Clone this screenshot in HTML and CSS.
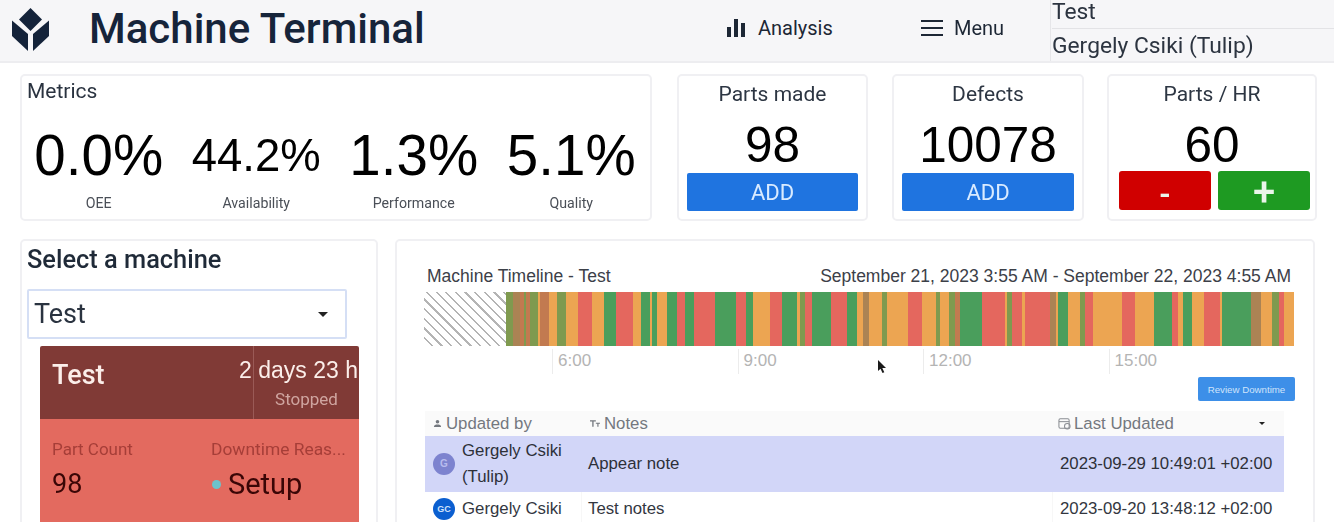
FILE: index.html
```html
<!DOCTYPE html>
<html lang="en">
<head>
<meta charset="utf-8">
<title>Machine Terminal</title>
<link rel="stylesheet" href="styles.css">
</head>
<body>
<div class="page">
  <header class="topbar">
    <svg class="logo" viewBox="0 0 60 60" width="60" height="60"><path d="M30.5 7 42 18.5 30.5 30 19 18.5Z"/><path d="M12 19.500 28 33V50L12 35Z"/><path d="M49 19.500 33 33V50L49 35Z"/></svg>
    <h1 class="title">Machine Terminal</h1>
    <a class="nav nav-analysis">
      <svg viewBox="0 0 20 20" width="20" height="20"><rect x="1" y="9" width="4" height="10"/><rect x="8" y="1" width="4" height="18"/><rect x="15" y="5" width="4" height="14"/></svg>
      <span>Analysis</span>
    </a>
    <a class="nav nav-menu">
      <svg viewBox="0 0 22 18" width="22" height="18"><rect y="1" width="22" height="2"/><rect y="8" width="22" height="2"/><rect y="15" width="22" height="2"/></svg>
      <span>Menu</span>
    </a>
    <div class="user">
      <div class="user-line">Test</div>
      <div class="user-line">Gergely Csiki (Tulip)</div>
    </div>
  </header>

  <section class="row-top">
    <div class="card metrics">
      <div class="metrics-title">Metrics</div>
      <div class="metric-grid">
        <div class="metric"><div class="metric-value">0.0%</div><div class="metric-label">OEE</div></div>
        <div class="metric"><div class="metric-value small">44.2%</div><div class="metric-label">Availability</div></div>
        <div class="metric"><div class="metric-value">1.3%</div><div class="metric-label">Performance</div></div>
        <div class="metric"><div class="metric-value">5.1%</div><div class="metric-label">Quality</div></div>
      </div>
    </div>
    <div class="card counter w190">
      <div class="counter-title">Parts made</div>
      <div class="counter-value">98</div>
      <button class="btn-add">ADD</button>
    </div>
    <div class="card counter w191">
      <div class="counter-title">Defects</div>
      <div class="counter-value">10078</div>
      <button class="btn-add">ADD</button>
    </div>
    <div class="card counter w210">
      <div class="counter-title">Parts / HR</div>
      <div class="counter-value">60</div>
      <div class="btn-pair">
        <button class="btn-step minus">-</button>
        <button class="btn-step plus">+</button>
      </div>
    </div>
  </section>

  <section class="row-bottom">
    <div class="card select-card">
      <h2 class="select-title">Select a machine</h2>
      <div class="dropdown"><span>Test</span><i class="caret"></i></div>
      <div class="machine">
        <div class="machine-head">
          <div class="machine-name">Test</div>
          <div class="machine-time">
            <div class="duration">2 days 23 hr</div>
            <div class="status">Stopped</div>
          </div>
        </div>
        <div class="machine-body">
          <div class="field f-count">
            <div class="field-label">Part Count</div>
            <div class="field-value">98</div>
          </div>
          <div class="field f-reason">
            <div class="field-label">Downtime Reas...</div>
            <div class="field-value reason"><i class="dot"></i>Setup</div>
          </div>
        </div>
      </div>
    </div>

    <div class="card timeline-card">
      <div class="tl-head"><span>Machine Timeline - Test</span><span>September 21, 2023 3:55 AM - September 22, 2023 4:55 AM</span></div>
      <div class="tl-chart">
        <div class="hatch"></div>
        <div class="bar">
          <i class="ol" style="flex:22"></i><i class="br" style="flex:20"></i><i class="rb" style="flex:12"></i><i class="ol" style="flex:6"></i><i class="rb" style="flex:12"></i><i class="ol" style="flex:25"></i><i class="or" style="flex:5"></i><i class="rb" style="flex:27"></i><i class="or" style="flex:23"></i><i class="ol" style="flex:27"></i><i class="or" style="flex:38"></i><i class="re" style="flex:42"></i><i class="or" style="flex:35"></i><i class="gr" style="flex:36"></i><i class="re" style="flex:50"></i><i class="or" style="flex:24"></i><i class="gr" style="flex:28"></i><i class="or" style="flex:5"></i><i class="gr" style="flex:15"></i><i class="or" style="flex:32"></i><i class="gr" style="flex:28"></i><i class="re" style="flex:25"></i><i class="gr" style="flex:27"></i><i class="re" style="flex:63"></i><i class="gr" style="flex:63"></i><i class="re" style="flex:29"></i><i class="gr" style="flex:23"></i><i class="or" style="flex:50"></i><i class="re" style="flex:37"></i><i class="gr" style="flex:45"></i><i class="or" style="flex:8"></i><i class="ol" style="flex:15"></i><i class="re" style="flex:22"></i><i class="gr" style="flex:55"></i><i class="re" style="flex:50"></i><i class="gr" style="flex:28"></i><i class="or" style="flex:18"></i><i class="br" style="flex:20"></i>
          <i class="or" style="flex:39"></i><i class="ol" style="flex:15"></i><i class="or" style="flex:63"></i><i class="re" style="flex:43"></i><i class="or" style="flex:40"></i><i class="ol" style="flex:12"></i><i class="or" style="flex:28"></i><i class="ol" style="flex:19"></i><i class="rb" style="flex:13"></i><i class="gr" style="flex:67"></i><i class="re" style="flex:68"></i><i class="or" style="flex:8"></i><i class="ol" style="flex:15"></i><i class="re" style="flex:29"></i><i class="or" style="flex:10"></i><i class="re" style="flex:75"></i><i class="br" style="flex:16"></i><i class="or" style="flex:8"></i><i class="gr" style="flex:29"></i><i class="or" style="flex:35"></i><i class="ol" style="flex:17"></i><i class="re" style="flex:23"></i><i class="or" style="flex:88"></i><i class="re" style="flex:38"></i><i class="or" style="flex:56"></i><i class="gr" style="flex:56"></i><i class="re" style="flex:17"></i><i class="or" style="flex:15"></i><i class="gr" style="flex:27"></i><i class="or" style="flex:36"></i><i class="re" style="flex:47"></i><i class="or" style="flex:8"></i><i class="gr" style="flex:87"></i><i class="br" style="flex:30"></i><i class="or" style="flex:33"></i><i class="ol" style="flex:19"></i><i class="re" style="flex:15"></i><i class="or" style="flex:31"></i>
        </div>
      </div>
      <div class="axis">
        <div class="tick">6:00</div>
        <div class="tick">9:00</div>
        <div class="tick">12:00</div>
        <div class="tick">15:00</div>
      </div>
      <div class="review-row"><button class="btn-review">Review Downtime</button></div>
      <div class="table">
        <div class="cell th">
          <svg viewBox="0 0 10 10" width="9" height="9"><circle cx="5" cy="3" r="2"/><path d="M1 9c0-2.500 2-3 4-3s4 .5 4 3Z"/></svg>
          <span>Updated by</span>
        </div>
        <div class="cell th">
          <svg viewBox="0 0 12 10" width="10" height="9"><path d="M0 1h7v1.500H4.300V9H2.700V2.500H0ZM7 4h5v1.200h-1.800V9H8.800V5.200H7Z"/></svg>
          <span>Notes</span>
        </div>
        <div class="cell th th-last">
          <svg viewBox="0 0 14 14" width="13" height="13" class="cal"><rect x="1" y="2" width="11" height="10" rx="1.500"/><path d="M1 5h11"/><circle cx="10" cy="10" r="3"/></svg>
          <span>Last Updated</span><i class="caret tiny"></i>
        </div>

        <div class="cell hl person"><span class="avatar av-g">G</span><span>Gergely Csiki (Tulip)</span></div>
        <div class="cell hl">Appear note</div>
        <div class="cell hl">2023-09-29 10:49:01 +02:00</div>

        <div class="cell person ruled"><span class="avatar av-gc">GC</span><span>Gergely Csiki</span></div>
        <div class="cell ruled">Test notes</div>
        <div class="cell">2023-09-20 13:48:12 +02:00</div>
      </div>
      <svg class="pointer" viewBox="0 0 10 14" width="10" height="14"><path d="M1 0v11l2.500-2.300L5.500 13l1.800-.8-2-4.300H9Z"/></svg>
    </div>
  </section>
</div>
</body>
</html>
```
FILE: styles.css
```css
* { box-sizing: border-box; }
html, body { margin: 0; padding: 0; background: #fff; }
.page {
  width: 1334px;
  height: 522px;
  overflow: hidden;
  font-family: Roboto, "Liberation Sans", sans-serif;
  color: #1a2433;
  filter: blur(0.45px);
}

/* top bar */
.topbar {
  display: flex;
  align-items: center;
  height: 63px;
  padding-bottom: 5px;
  background: #f6f6f8;
  border-bottom: 2px solid #ededf0;
}
.logo { flex: none; fill: #14233a; margin: 5px 29px 0 0; }
.title {
  margin: 0;
  width: 347px;
  flex: none;
  font-size: 42px;
  font-weight: 500;
  color: #16243a;
  white-space: nowrap;
}
.nav {
  display: flex;
  align-items: center;
  flex: none;
  font-size: 20px;
  color: #1d2735;
}
.nav svg { fill: #1d2735; flex: none; }
.nav-analysis { gap: 12px; margin-left: 290px; width: 195px; }
.nav-menu { gap: 11px; width: 129px; }
.user {
  flex: none;
  align-self: flex-start;
  width: 284px;
  height: 61px;
  border-left: 1px solid #e6e6e9;
  font-size: 22.800px;
  color: #2c3440;
  padding-left: 1px;
}
.user-line { height: 29px; line-height: 23px; border-bottom: 1px solid #e3e3e6; white-space: nowrap; }
.user-line + .user-line { height: 32px; line-height: 34px; border-bottom: 0; }

/* cards */
.card {
  background: #fff;
  border: 2px solid #f0f0f3;
  border-radius: 5px;
}
.row-top {
  display: flex;
  height: 147px;
  margin: 11px 0 0 20px;
}
.metrics { width: 632px; margin-right: 25px; }
.metrics-title { font-size: 21px; line-height: 22px; padding: 4px 0 0 5px; color: #2a3340; }
.metric-grid { display: grid; grid-template-columns: repeat(4, 1fr); margin: 22px 0 0 -2px; }
.metric { text-align: center; font-family: "Liberation Sans", sans-serif; color: #000; }
.metric-value { font-size: 56.500px; line-height: 64px; white-space: nowrap; }
.metric-value.small { font-size: 45.500px; }
.metric-label {
  font-family: Roboto, sans-serif;
  font-size: 14.200px;
  line-height: 16px;
  margin-top: 7px;
  color: #4a4f57;
}

.counter { display: flex; flex-direction: column; align-items: center; padding: 0 8px; }
.w190 { width: 191px; margin-right: 24px; }
.w191 { width: 192px; margin-right: 23px; }
.w210 { width: 210px; }
.counter-title { font-size: 21px; line-height: 24px; margin-top: 6px; color: #2d3643; white-space: nowrap; }
.counter-value {
  font-family: "Liberation Sans", sans-serif;
  font-size: 49.500px;
  line-height: 56px;
  margin-top: 11px;
  color: #000;
}
.btn-add {
  width: 100%;
  height: 38px;
  border: 0;
  border-radius: 2px;
  background: #1f74e0;
  color: #d9ebff;
  font: 22px Roboto, sans-serif;
  padding: 0;
}
.btn-pair { display: flex; gap: 7px; flex: none; width: 191px; margin: -2px 0 0 5px; }
.btn-step {
  flex: 1;
  height: 39px;
  border: 0;
  border-radius: 3px;
  color: #eaf5ea;
  padding: 0;
}
.minus { background: #d00000; font: 700 30px/46px Roboto, sans-serif; }
.plus { background: #1e9a22; font: 500 40px/44px Roboto, sans-serif; }

/* bottom row */
.row-bottom {
  display: flex;
  align-items: flex-start;
  margin: 18px 0 0 20px;
}
.select-card { width: 358px; height: 340px; margin-right: 17px; padding: 0 0 0 5px; }
.select-title { margin: 0; font-size: 25.400px; font-weight: 500; line-height: 30px; padding-top: 3px; color: #1f2a38; white-space: nowrap; }
.dropdown {
  display: flex;
  align-items: center;
  justify-content: space-between;
  width: 320px;
  height: 50px;
  margin-top: 15px;
  padding: 0 17px 0 5px;
  border: 2px solid #d5dff5;
  border-radius: 2px;
  font-size: 27px;
  color: #2a3340;
}
.caret {
  display: block;
  width: 0;
  height: 0;
  border: 5px solid transparent;
  border-top-color: #222;
  border-bottom: 0;
}
.machine { width: 319px; margin: 7px 0 0 13px; }
.machine-head {
  display: flex;
  height: 73px;
  background: #803a36;
  border-radius: 2px 2px 0 0;
  overflow: hidden;
  color: #fbeeea;
}
.machine-name { width: 213px; flex: none; font-size: 27px; font-weight: 500; line-height: 32px; padding: 13px 0 0 12px; }
.machine-time {
  width: 106px;
  flex: none;
  border-left: 1px solid #9a5a56;
  text-align: center;
}
.duration {
  font-family: "Liberation Sans", sans-serif;
  font-size: 23px;
  line-height: 26px;
  padding-top: 11px;
  margin-left: -15px;
  white-space: nowrap;
  text-align: left;
}
.status { font-size: 17px; line-height: 20px; margin-top: 6px; color: #cfa5a0; }
.machine-body {
  display: flex;
  height: 120px;
  padding: 20px 0 0 12px;
  background: #e36a5f;
}
.f-count { width: 159px; }
.field-label { font-size: 17px; line-height: 20px; color: #a63e38; white-space: nowrap; }
.f-reason .field-label { font-size: 17.400px; }
.field-value { font-size: 27px; line-height: 32px; margin-top: 9px; color: #3a0606; }
.reason { display: flex; align-items: center; font-size: 29px; }
.dot {
  width: 9px;
  height: 9px;
  margin: 0 7px 0 1px;
  border-radius: 50%;
  background: #6cc3cc;
}

/* timeline */
.timeline-card {
  position: relative;
  width: 920px;
  height: 340px;
  padding: 0 0 0 27px;
  font-family: "Liberation Sans", sans-serif;
}
.tl-head {
  display: flex;
  justify-content: space-between;
  width: 864px;
  margin-left: 3px;
  padding-top: 25px;
  font-size: 17.500px;
  line-height: 20px;
  color: #3c4048;
}
.tl-head span { white-space: nowrap; }
.tl-chart { display: flex; height: 54px; width: 870px; margin-top: 6px; }
.hatch {
  width: 82px;
  flex: none;
  background: repeating-linear-gradient(45deg, #fff 0, #fff 5.2px, #b4b4b4 5.2px, #b4b4b4 6.8px);
}
.bar { display: flex; flex: 1; }
.bar i { display: block; min-width: 0; }
.gr { background: #4a9e5c; }
.re { background: #e4675e; }
.or { background: #eca552; }
.ol { background: #7f9a4f; }
.br { background: #ab8354; }
.rb { background: #c27a50; }
.axis { display: flex; margin: 3px 0 0 128px; height: 25px; }
.tick {
  width: 185.500px;
  flex: none;
  border-left: 1px solid #ececec;
  padding: 3px 0 0 5px;
  font-size: 17px;
  line-height: 18px;
  color: #b4b4b4;
}
.review-row { display: flex; justify-content: flex-end; width: 871px; margin-top: 3px; }
.btn-review {
  width: 97px;
  height: 24px;
  padding: 0;
  border: 0;
  border-radius: 2px;
  background: #3d8fe8;
  color: #cfe4fb;
  font: 9.700px "Liberation Sans", sans-serif;
  white-space: nowrap;
}
.table {
  display: grid;
  grid-template-columns: 157px 471px 231px;
  grid-template-rows: 25px 56px 34px;
  width: 859px;
  margin: 10px 0 0 1px;
  font-size: 16.800px;
  color: #33373f;
}
.cell { display: flex; align-items: center; padding-left: 6px; white-space: nowrap; }
.cell.person { white-space: normal; }
.cell:nth-child(3n) { padding-left: 7px; }
.th { background: #fafafa; color: #74787f; gap: 4px; padding-left: 8px; }
.th svg { fill: #74787f; flex: none; }
.th-last { gap: 3px; }
.cell.th-last { padding-left: 5px; }
.th .cal { fill: none; stroke: #8a8d93; stroke-width: 1.100; }
.th-last span { flex: 1; }
.tiny { border-width: 3px; border-bottom: 0; margin-right: 19px; }
.hl { background: #d2d6f8; color: #2d3038; line-height: 26px; }
.person { gap: 7px; padding-left: 8px; }
.person span:last-child { line-height: 26px; }
.ruled { border-right: 1px solid #f7f7f7; }
.avatar {
  flex: none;
  width: 22px;
  height: 22px;
  border-radius: 50%;
  display: flex;
  align-items: center;
  justify-content: center;
  font-size: 9px;
  font-weight: 700;
  line-height: 1;
}
.av-g { background: #7d83cf; color: #b8bcee; font-size: 10px; }
.av-gc { background: #0b5fd0; color: #cfe2fb; }
.pointer { position: absolute; left: 480px; top: 119px; fill: #1a1a1a; }
```
